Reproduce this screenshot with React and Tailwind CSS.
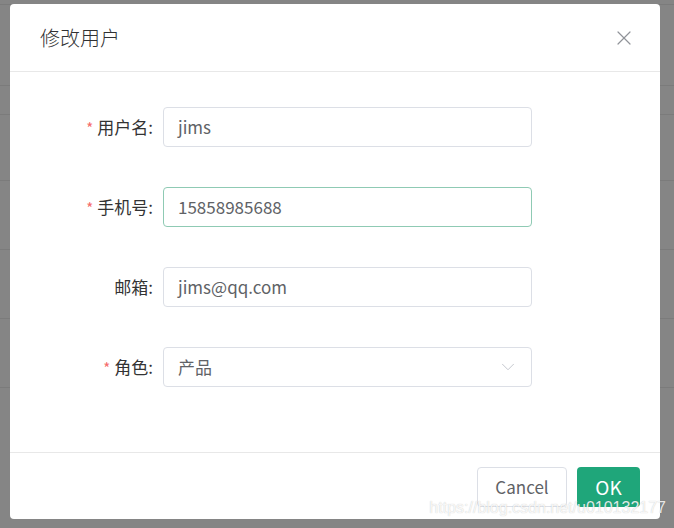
import { X, ChevronDown } from "lucide-react";

const rows = [
  { label: "用户名", value: "jims", required: true },
  { label: "手机号", value: "15858985688", required: true, focused: true },
  { label: "邮箱", value: "jims@qq.com", required: false },
  { label: "角色", value: "产品", required: true, select: true },
];

const Field = ({ label, value, required, focused, select }) => (
  <div className="flex items-center h-10">
    <div className="w-[143px] flex justify-end items-center text-[17px] text-[#333]">
      {required && <span className="text-[#f56c6c] text-[15px] mr-[4px] mt-[3px]">*</span>}
      <span>{label}:</span>
    </div>
    <div
      className={`ml-[10px] w-[369px] h-10 rounded-[4px] border flex items-center pl-[14px] pr-[12px] text-[17px] text-[#606266] ${
        focused ? "border-[#8fcab4]" : "border-[#dcdfe6]"
      }`}
    >
      <span className="flex-1">{value}</span>
      {select && <ChevronDown size={22} strokeWidth={0.9} className="text-[#b8bcc4]" />}
    </div>
  </div>
);

const App = () => {
  return (
    <div
      className="relative w-[674px] h-[528px] bg-[#858585] overflow-hidden"
      style={{ fontFamily: '"Noto Sans CJK SC", "Noto Sans", sans-serif' }}
    >
      <div className="flex flex-col">
        <div className="h-[5px] border-b border-[#7b7b7b]" />
        <div className="h-[81px] border-b border-[#7b7b7b]" />
        <div className="h-[29px] border-b border-[#7b7b7b]" />
        <div className="h-[66px] border-b border-[#7b7b7b]" />
        <div className="h-[69px] border-b border-[#7b7b7b]" />
        <div className="h-[69px] border-b border-[#7b7b7b]" />
        <div className="h-[69px] border-b border-[#7b7b7b]" />
      </div>

      <div className="absolute left-[10px] top-[4px] w-[650px] h-[515px] bg-white rounded-[4px] flex flex-col">
        <div className="h-[68px] flex items-center justify-between pl-[30px] pr-[24px] border-b border-[#e8e8e8]">
          <span className="text-[20px] font-light text-[#303133]">修改用户</span>
          <X size={24} strokeWidth={1.2} className="text-[#909399]" />
        </div>
        <div className="flex-1 flex flex-col gap-10 pt-[35px]">
          {rows.map((r) => (
            <Field key={r.label} {...r} />
          ))}
        </div>
        <div className="h-[67px] border-t border-[#e8e8e8] flex justify-end items-start pt-[14px] pr-[20px] gap-[10px]">
          <button className="w-[90px] h-10 rounded-[4px] border border-[#dcdfe6] text-[17px] text-[#606266] bg-white">
            Cancel
          </button>
          <button className="w-[63px] h-10 rounded-[4px] bg-[#1fa67a] text-[19px] text-white">
            OK
          </button>
        </div>
      </div>

      <div
        className="absolute right-[8px] bottom-[8px] text-[16px] text-white/85 [text-shadow:0_0_1px_rgba(0,0,0,0.25)]"
        style={{ fontFamily: '"Liberation Sans", sans-serif' }}
      >
        https://blog.csdn.net/u010132177
      </div>
    </div>
  );
};

export default App;
